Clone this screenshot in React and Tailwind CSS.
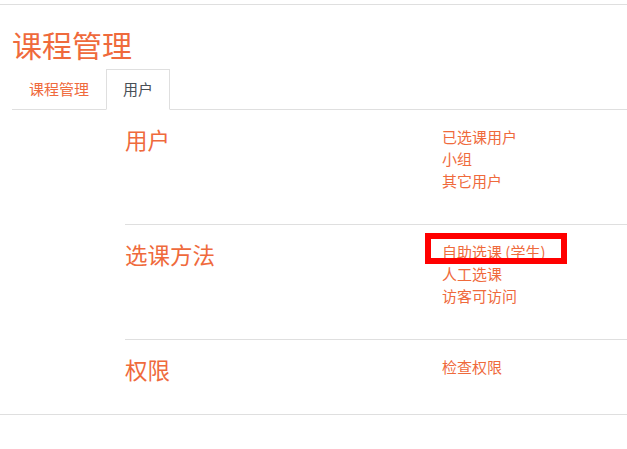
const orange = 'text-[#ef6a3c]'

const sections = [
  { title: '用户', links: ['已选课用户', '小组', '其它用户'], pb: 'pb-[32px]' },
  { title: '选课方法', links: ['自助选课 (学生)', '人工选课', '访客可访问'], pb: 'pb-[32px]', mark: 0 },
  { title: '权限', links: ['检查权限'], pb: 'pb-[32px]' },
]

export default function App() {
  return (
    <div
      className="min-h-screen bg-white pt-[4px]"
      style={{ fontFamily: '"Noto Sans CJK SC", "Noto Sans", sans-serif' }}
    >
      <div className="border-t border-[#dfdfdf]">
        <div className="pl-[12px]">
          <h1 className={`mt-[21px] text-[30px] leading-[36px] font-normal ${orange}`}>课程管理</h1>
          <div className="mt-[7px] flex border-b border-[#dfdfdf]">
            <div className={`border border-transparent px-[16px] py-[8px] text-[15px] leading-[22px] ${orange}`}>
              课程管理
            </div>
            <div className="-mb-px border border-[#dfdfdf] border-b-white bg-white px-[16px] py-[8px] text-[15px] leading-[22px] text-[#495057]">
              用户
            </div>
          </div>
        </div>

        <div className="ml-[125px]">
          {sections.map((s, i) => (
            <div
              key={s.title}
              className={`flex items-start pt-[16px] ${s.pb} ${i < sections.length - 1 ? 'border-b border-[#dfdfdf]' : ''}`}
            >
              <h3 className={`w-[317px] text-[22.5px] leading-[26px] font-normal ${orange}`}>{s.title}</h3>
              <ul className="flex flex-col">
                {s.links.map((l, j) => (
                  <li key={l} className={`relative text-[15px] leading-[22px] ${orange}`}>
                    {l}
                    {s.mark === j && (
                      <span className="absolute left-[-17px] top-[-8px] h-[31px] w-[142px] border-[6px] border-[#ff0000]" />
                    )}
                  </li>
                ))}
              </ul>
            </div>
          ))}
        </div>
        <div className="border-b border-[#dfdfdf]" />
      </div>
    </div>
  )
}
